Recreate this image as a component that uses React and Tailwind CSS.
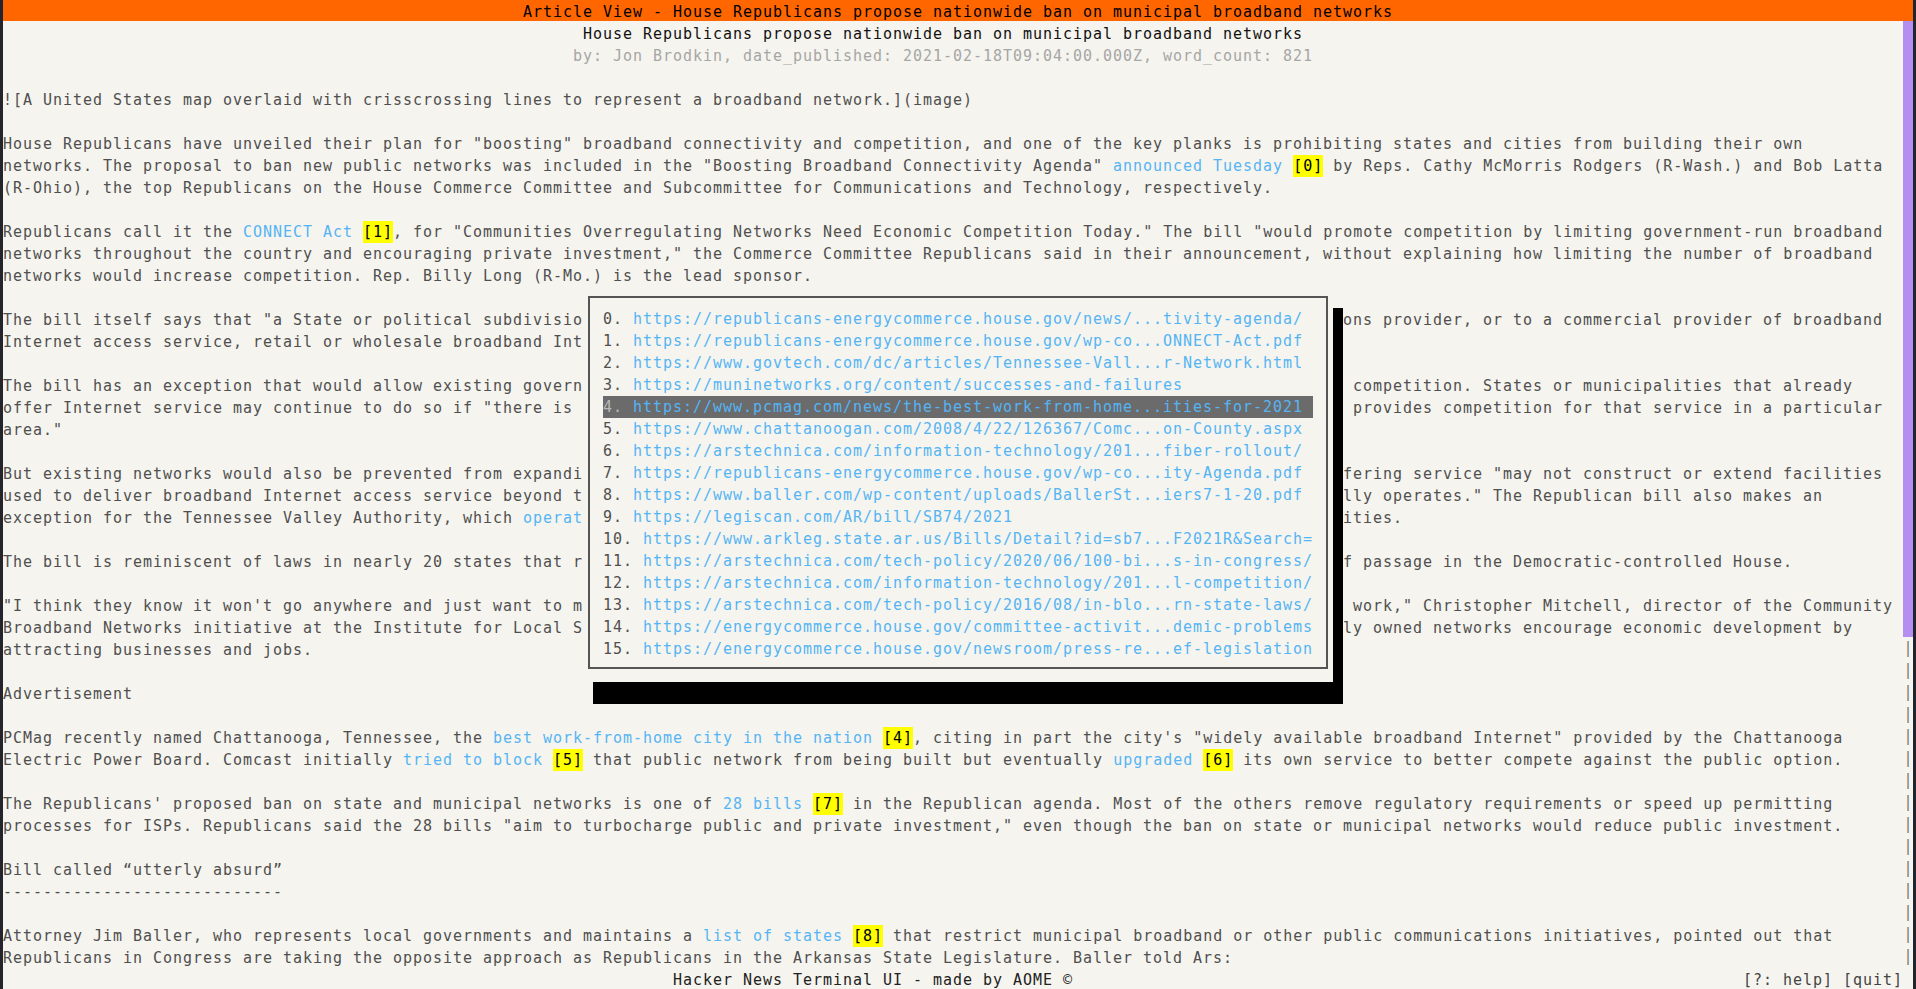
import React from 'react'

const L = (text) => ({ l: text })
const M = (text) => ({ m: text })
const GAP = { g: true }
// line whose middle is hidden under the links popup (cols 58..133)
const gap = (left, right) => [left, GAP, right]

const ROWS = [
  '',
  '![A United States map overlaid with crisscrossing lines to represent a broadband network.](image)',
  '',
  'House Republicans have unveiled their plan for "boosting" broadband connectivity and competition, and one of the key planks is prohibiting states and cities from building their own',
  ['networks. The proposal to ban new public networks was included in the "Boosting Broadband Connectivity Agenda" ', L('announced Tuesday'), ' ', M('[0]'), ' by Reps. Cathy McMorris Rodgers (R-Wash.) and Bob Latta'],
  '(R-Ohio), the top Republicans on the House Commerce Committee and Subcommittee for Communications and Technology, respectively.',
  '',
  ['Republicans call it the ', L('CONNECT Act'), ' ', M('[1]'), ', for "Communities Overregulating Networks Need Economic Competition Today." The bill "would promote competition by limiting government-run broadband'],
  'networks throughout the country and encouraging private investment," the Commerce Committee Republicans said in their announcement, without explaining how limiting the number of broadband',
  'networks would increase competition. Rep. Billy Long (R-Mo.) is the lead sponsor.',
  '',
  gap('The bill itself says that "a State or political subdivisio', 'ons provider, or to a commercial provider of broadband'),
  'Internet access service, retail or wholesale broadband Int',
  '',
  gap('The bill has an exception that would allow existing govern', ' competition. States or municipalities that already'),
  gap('offer Internet service may continue to do so if "there is ', ' provides competition for that service in a particular'),
  'area."',
  '',
  gap('But existing networks would also be prevented from expandi', 'fering service "may not construct or extend facilities'),
  gap('used to deliver broadband Internet access service beyond t', 'lly operates." The Republican bill also makes an'),
  ['exception for the Tennessee Valley Authority, which ', L('operat'), GAP, 'ities.'],
  '',
  gap('The bill is reminiscent of laws in nearly 20 states that r', 'f passage in the Democratic-controlled House.'),
  '',
  gap('"I think they know it won\'t go anywhere and just want to m', ' work," Christopher Mitchell, director of the Community'),
  gap('Broadband Networks initiative at the Institute for Local S', 'ly owned networks encourage economic development by'),
  'attracting businesses and jobs.',
  '',
  'Advertisement',
  '',
  ['PCMag recently named Chattanooga, Tennessee, the ', L('best work-from-home city in the nation'), ' ', M('[4]'), ', citing in part the city\'s "widely available broadband Internet" provided by the Chattanooga'],
  ['Electric Power Board. Comcast initially ', L('tried to block'), ' ', M('[5]'), ' that public network from being built but eventually ', L('upgraded'), ' ', M('[6]'), ' its own service to better compete against the public option.'],
  '',
  ['The Republicans\' proposed ban on state and municipal networks is one of ', L('28 bills'), ' ', M('[7]'), ' in the Republican agenda. Most of the others remove regulatory requirements or speed up permitting'],
  'processes for ISPs. Republicans said the 28 bills "aim to turbocharge public and private investment," even though the ban on state or municipal networks would reduce public investment.',
  '',
  'Bill called \u201cutterly absurd\u201d',
  '----------------------------',
  '',
  ['Attorney Jim Baller, who represents local governments and maintains a ', L('list of states'), ' ', M('[8]'), ' that restrict municipal broadband or other public communications initiatives, pointed out that'],
  'Republicans in Congress are taking the opposite approach as Republicans in the Arkansas State Legislature. Baller told Ars:',
]

const URLS = [
  'https://republicans-energycommerce.house.gov/news/...tivity-agenda/',
  'https://republicans-energycommerce.house.gov/wp-co...ONNECT-Act.pdf',
  'https://www.govtech.com/dc/articles/Tennessee-Vall...r-Network.html',
  'https://muninetworks.org/content/successes-and-failures',
  'https://www.pcmag.com/news/the-best-work-from-home...ities-for-2021',
  'https://www.chattanoogan.com/2008/4/22/126367/Comc...on-County.aspx',
  'https://arstechnica.com/information-technology/201...fiber-rollout/',
  'https://republicans-energycommerce.house.gov/wp-co...ity-Agenda.pdf',
  'https://www.baller.com/wp-content/uploads/BallerSt...iers7-1-20.pdf',
  'https://legiscan.com/AR/bill/SB74/2021',
  'https://www.arkleg.state.ar.us/Bills/Detail?id=sb7...F2021R&Search=',
  'https://arstechnica.com/tech-policy/2020/06/100-bi...s-in-congress/',
  'https://arstechnica.com/information-technology/201...l-competition/',
  'https://arstechnica.com/tech-policy/2016/08/in-blo...rn-state-laws/',
  'https://energycommerce.house.gov/committee-activit...demic-problems',
  'https://energycommerce.house.gov/newsroom/press-re...ef-legislation',
]

function Line({ row }) {
  const segs = Array.isArray(row) ? row : [row]
  return (
    <div className="h-[22px] whitespace-pre">
      {segs.map((s, i) => {
        if (typeof s === 'string') return <span key={i}>{s}</span>
        if (s.g) return <span key={i} className="inline-block w-[760px]" />
        if (s.l) return <span key={i} className="text-[#55b4f4]">{s.l}</span>
        return <span key={i} className="bg-[#ffff00] text-black py-[2px]">{s.m}</span>
      })}
    </div>
  )
}

function LinksPopup({ selected }) {
  return (
    <div className="absolute left-[583px] top-[286px]">
      <div className="absolute left-[10px] top-[22px] w-[750px] h-[396px] bg-black" />
      <div className="relative w-[750px] h-[396px] bg-[#f5f4ee] pt-[10px] pb-[13px] px-[5px] flex">
        <div className="flex-1 border-2 border-[#555] pt-[10px] pl-[13px]">
          {URLS.map((u, i) => (
            <div key={i} className={`w-[710px] h-[22px] whitespace-pre ${i === selected ? 'bg-[#6b6b6b]' : ''}`}>
              <span className={i === selected ? 'text-[#b8b8b8]' : 'text-[#4f4f4f]'}>{i}. </span>
              <span className="text-[#55b4f4]">{u}</span>
            </div>
          ))}
        </div>
      </div>
    </div>
  )
}

export default function App() {
  return (
    <div className="relative h-[989px] overflow-hidden flex bg-[#f5f4ee] font-['DejaVu_Sans_Mono','Liberation_Mono',monospace] text-[15px] leading-[22px] tracking-[0.97px] text-[#4f4f4f]">
      <div className="w-[3px] shrink-0 bg-[#24242c]" />
      <div className="w-[1910px] shrink-0 flex flex-col">
        <div className="h-[22px]">
          <div className="h-[21px] bg-[#ff6600] text-black text-center whitespace-pre leading-[24px]">
            Article View - House Republicans propose nationwide ban on municipal broadband networks
          </div>
        </div>
        <div className="flex">
          <div className="w-[1900px] pt-[2px]">
            <div className="h-[22px] whitespace-pre pl-[580px] text-[#111]">House Republicans propose nationwide ban on municipal broadband networks</div>
            <div className="h-[22px] whitespace-pre pl-[570px] text-[#a6a6a6]">by: Jon Brodkin, date_published: 2021-02-18T09:04:00.000Z, word_count: 821</div>
            {ROWS.map((r, i) => <Line key={i} row={r} />)}
          </div>
          <div className="w-[10px] flex flex-col">
            <div className="h-[616px] bg-[#b48ef0]" />
            {Array.from({ length: 15 }).map((_, i) => (
              <div key={i} className="h-[22px] text-[#7a7a7a] tracking-normal flex justify-center">|</div>
            ))}
          </div>
        </div>
        <div className="h-[22px] w-[1900px] flex whitespace-pre text-[#222]">
          <div className="flex-1 text-center">Hacker News Terminal UI - made by AOME ©</div>
          <div className="text-[#444]">[?: help] [quit]</div>
        </div>
      </div>
      <div className="w-[3px] shrink-0 bg-[#24242c]" />
      <LinksPopup selected={4} />
    </div>
  )
}
